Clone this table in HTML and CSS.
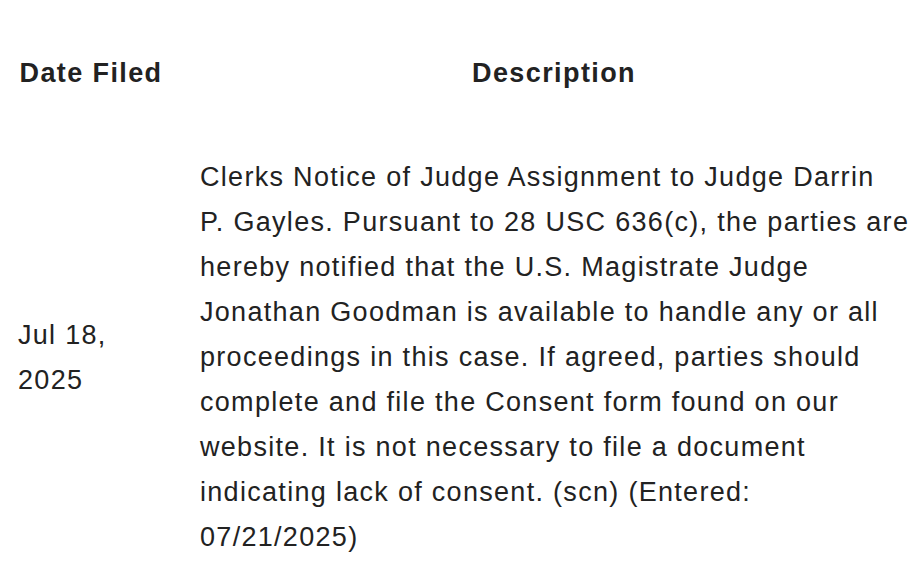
FILE: index.html
```html
<!DOCTYPE html>
<html lang="en">
<head>
<meta charset="utf-8">
<title>Docket</title>
<link rel="stylesheet" href="styles.css">
</head>
<body>
<table class="docket">
  <thead>
    <tr>
      <th class="col-date">Date Filed</th>
      <th class="col-desc">Description</th>
    </tr>
  </thead>
  <tbody>
    <tr>
      <td class="cell-date">Jul 18, 2025</td>
      <td class="cell-desc">Clerks Notice of Judge Assignment to Judge Darrin P.&nbsp;Gayles. Pursuant to 28 USC 636(c), the parties are hereby notified that the U.S. Magistrate Judge Jonathan Goodman is available to handle any or all proceedings in this case. If agreed, parties should complete and file the Consent form found on our website. It is not necessary to file a document indicating lack of consent. (scn) (Entered: 07/21/2025)</td>
    </tr>
  </tbody>
</table>
</body>
</html>
```

FILE: styles.css
```css
html, body {
  margin: 0;
  padding: 0;
  background: #ffffff;
}
body {
  font-family: "Liberation Sans", Arial, sans-serif;
  color: #222222;
  font-size: 27px;
  line-height: 45px;
  letter-spacing: 1.3px;
}
.docket {
  border-collapse: collapse;
  width: 920px;
  table-layout: fixed;
}
.docket th {
  font-weight: bold;
  text-align: center;
  white-space: nowrap;
  letter-spacing: 1.4px;
  padding: 51px 12px 29px 18px;
}
.docket td {
  vertical-align: middle;
  text-align: left;
  padding: 30px 6px 12px 18px;
}
.docket .col-date,
.docket .cell-date {
  width: 146px;
  padding-left: 18px;
  padding-right: 18px;
}
```
